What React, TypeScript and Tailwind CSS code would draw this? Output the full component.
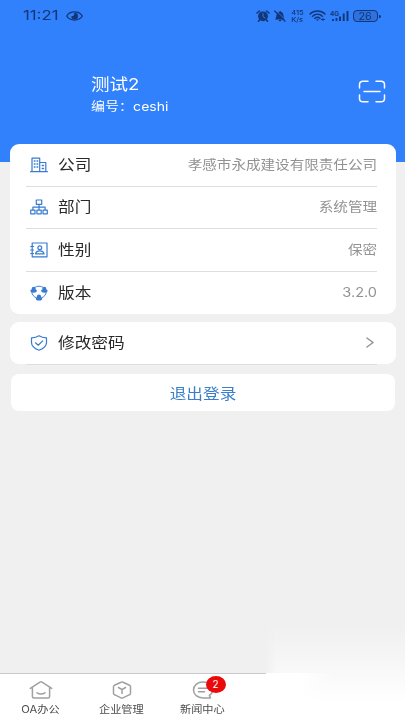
import type { ReactNode } from "react";

const stroke = { fill: "none", stroke: "currentColor", strokeLinecap: "round", strokeLinejoin: "round" } as const;

function StatusBar() {
  return (
    <div className="flex h-8 items-center justify-between pl-[23px] pr-[24px] text-[#123676]">
      <div className="flex items-center gap-[5px]">
        <span className="w-[38px] origin-left scale-x-[1.240] text-[13.500px] leading-none whitespace-nowrap">11:21</span>
        <svg width="17" height="10" viewBox="0 0 17 10">
          <path d="M.7 5C4-.4 13-.4 16.300 5C13 10.400 4 10.400.7 5Z" {...stroke} strokeWidth="1.300" />
          <path d="M8.500 1.700A3.400 3.400 0 1 1 5.200 5.400L7.600 4.800Z" fill="currentColor" />
        </svg>
      </div>
      <div className="flex items-center">
        <svg width="14" height="12" viewBox="0 0 14 12">
          <circle cx="7" cy="6.300" r="4.900" fill="currentColor" />
          <path d="M1 3L3.500 1M13 3L10.500 1M3.500 10L2.500 11.300M10.500 10L11.500 11.300" {...stroke} strokeWidth="1.500" />
          <path d="M7 3.500V6.500L9 8" {...stroke} stroke="#3180fc" strokeWidth=".9" />
        </svg>
        <svg className="ml-[4px]" width="12" height="12" viewBox="0 0 12 12">
          <path d="M1 9.400C2.700 7.500 2 5 3 3.400C3.800 2 5 2 5.300 1.700C6 .6 6.800 1 7 1.800C10.300 3 8.800 7 11 9.400ZM4.500 10H7.600C7 11.800 5.200 11.800 4.500 10Z" fill="currentColor" />
          <path d="M1.800.5L11.700 10" stroke="#3180fc" strokeWidth=".9" />
          <path d="M.7 1L11 11.200" {...stroke} strokeWidth="1.200" />
        </svg>
        <div className="ml-[4px] flex w-[14px] flex-col items-center gap-px text-[6.500px] font-medium">
          <span className="h-[6px] scale-x-[1.150] leading-[6px]">415</span>
          <span className="h-[6px] scale-x-[1.150] leading-[6px]">K/s</span>
        </div>
        <svg className="ml-[5px]" width="17" height="12" viewBox="0 0 17 12">
          <path d="M1 4C5 .1 12 .1 16 4M3.500 6.300C6.500 3.600 10.500 3.600 13.300 6.300M5.800 8.300C7.600 7 9.300 7 11 8.300" {...stroke} strokeWidth="1.500" />
          <path d="M7 9.300H10L8.500 11Z" fill="currentColor" />
          <path d="M12.500 9.500H15.500M14 8.500V10.500" {...stroke} strokeWidth="1" />
        </svg>
        <svg className="ml-[4px]" width="19" height="12" viewBox="0 0 19 12">
          <text x="0" y="5.800" fontSize="6.500" fontWeight="600" fill="currentColor">4G</text>
          <path d="M3 9V11M6.500 8V11M10 6.500V11M13.700 3.500V11M17.500 1V11" stroke="currentColor" strokeWidth="1.900" />
        </svg>
        <div className="ml-[4px] flex h-[12px] w-[25px] items-center justify-center rounded-[4px] border border-[#123676] bg-[#2d72e0] text-[10px] leading-none">
          <span className="scale-x-[1.080]">26</span>
        </div>
        <div className="ml-px h-[3px] w-[2px] rounded-r bg-[#123676]" />
      </div>
    </div>
  );
}

const BuildingIcon = () => (
  <svg width="18" height="16" viewBox="0 0 18 16" {...stroke} strokeWidth="1.200">
    <path d="M2 14.500V1.200H9.700V14.500M9.700 5.500H15.800V14.500M.6 14.700H17.400" />
    <path d="M4.300 4H5M7 4H7.700M4.300 7H5M7 7H7.700M4.300 10H5M7 10H7.700M12.300 8.500H13.500M12.300 11.500H13.500" strokeWidth="1.400" />
  </svg>
);

const DepartmentIcon = () => (
  <svg className="-mt-px" width="18" height="16" viewBox="0 0 18 16" {...stroke} strokeWidth="1.200">
    <path d="M6.300 1H11.700V5.300H6.300ZM.7 11.200H5V14.800H.7ZM6.900 11.200H11.200V14.800H6.900ZM13 11.200H17.300V14.800H13ZM9 5.300V11M2.900 11V8.200H15.100V11" />
  </svg>
);

const ContactIcon = () => (
  <svg className="-mt-px" width="18" height="16" viewBox="0 0 18 16" {...stroke} strokeWidth="1.200">
    <path d="M2.200 1H17V14.800H2.200ZM.7 4.500H3.500M.7 8H3.500M.7 11.500H3.500" />
    <circle cx="9.800" cy="5.800" r="1.900" />
    <path d="M5.500 11.800C6.100 9.500 8 8.800 9.800 8.800C11.600 8.800 13.500 9.500 14.100 11.800Z" />
  </svg>
);

const VersionIcon = () => (
  <svg className="-mt-px" width="18" height="16" viewBox="0 0 18 16">
    <path d="M4.500 2.600C7.200.7 10.800.7 13.500 2.600M1.800 7C2 9.800 3.600 11.600 6 12.600M16.200 7C16 9.800 14.400 11.600 12 12.600" {...stroke} strokeWidth="1" />
    <g fill="currentColor">
      <circle cx="3.700" cy="3.700" r="2" />
      <ellipse cx="3.600" cy="5.800" rx="3.200" ry="1.900" />
      <circle cx="14.300" cy="3.700" r="2" />
      <ellipse cx="14.400" cy="5.800" rx="3.200" ry="1.900" />
      <circle cx="9" cy="11.600" r="2.100" />
      <ellipse cx="9" cy="13.700" rx="3.200" ry="1.900" />
    </g>
  </svg>
);

const ShieldIcon = () => (
  <svg className="-mt-px" width="18" height="16" viewBox="0 0 18 16" {...stroke} strokeWidth="1.200">
    <path d="M9 .8C6.800 2.300 4 2.800 1.500 2.900V7.500C1.500 11 5 13.800 9 15.200C13 13.800 16.500 11 16.500 7.500V2.900C14 2.800 11.200 2.300 9 .8Z" />
    <path d="M5.500 7.800L8.200 10.200L12.700 5.900" />
  </svg>
);

function Row({ icon, label, value, last }: { icon: ReactNode; label: string; value: ReactNode; last?: boolean }) {
  return (
    <div className={`mx-4 flex items-center pl-1 pr-[3px] ${last ? "h-[43px] pt-px" : "h-[42.500px]"}`}>
      <span className="w-[18px] shrink-0 text-[#397bd0]">{icon}</span>
      <span className="ml-[9.500px] origin-left scale-x-[1.110] pb-[2px] text-[15px] leading-none whitespace-nowrap text-[#292929]">{label}</span>
      <span className="ml-auto origin-right scale-x-[1.120] pb-[2px] text-[13px] leading-none whitespace-nowrap text-[#929292]">{value}</span>
    </div>
  );
}

const Divider = () => <div className="ml-4 mr-[19px] -mt-px h-px bg-[#dedede]" />;

const HomeIcon = () => (
  <svg width="24" height="18" viewBox="0 0 24 18" {...stroke} strokeWidth="1.500">
    <path d="M1.300 7.400L11 1.100Q12 .6 13 1.100L22.700 7.400M3.400 6.500V15.500Q3.400 17 5 17H19Q20.600 17 20.600 15.500V6.500M8 11.700C10 13.500 14 13.500 16 11.700" />
  </svg>
);

const CubeIcon = () => (
  <svg width="20" height="18" viewBox="0 0 20 18" {...stroke} strokeWidth="1.500">
    <path d="M9 1.200Q10 .6 11 1.200L17.600 4.300Q18.500 4.800 18.500 5.500V12.500Q18.500 13.300 17.600 13.700L11 16.900Q10 17.300 9 16.900L2.400 13.700Q1.500 13.300 1.500 12.500V5.500Q1.500 4.800 2.400 4.300ZM6.500 6.500L10 8.600L13.500 6.500M10 8.600V12.500" />
  </svg>
);

const NewsIcon = () => (
  <svg width="22" height="18" viewBox="0 0 22 18" {...stroke} strokeWidth="1.500">
    <path d="M18.500 16.900H11C5.500 16.900 1.500 13.500 1.500 9C1.500 4.500 5.500 1.100 11 1.100C16.500 1.100 20.500 4.500 20.500 9C20.500 11.500 19.300 13.300 17.300 14.500ZM6.500 7.200H15M6.500 10.700H12.500" />
  </svg>
);

function Tab({ icon, label, badge }: { icon: ReactNode; label: string; badge?: string }) {
  return (
    <div className="flex w-[81px] flex-col items-center pt-[7px]">
      <div className="relative h-[19px] text-[#a0a0a0]">
        {icon}
        {badge && (
          <span className="absolute -top-[5px] left-[14px] flex h-[17px] w-[20px] items-center justify-center rounded-[50%] bg-[#ec0909] text-[10px] text-white">
            {badge}
          </span>
        )}
      </div>
      <span className="mt-[2px] scale-x-[1.100] text-[10.200px] leading-[14px] whitespace-nowrap text-[#4c4c4c]">{label}</span>
    </div>
  );
}

export default function App() {
  return (
    <div className="relative flex h-[720px] w-[405px] flex-col overflow-hidden bg-[#f0f0f0] font-[Inter,'Noto_Sans_CJK_SC',sans-serif]">
      <header className="h-[162px] shrink-0 bg-[#3180fc]">
        <StatusBar />
        <div className="flex items-start justify-between pl-[91px] pr-[19px] pt-[42px] text-white">
          <div className="flex flex-col items-start">
            <h1 className="origin-left scale-x-[1.160] text-[16px] leading-[20px]">测试2</h1>
            <p className="mt-[4px] origin-left scale-x-[1.170] text-[12px] leading-[17px] whitespace-nowrap">编号：ceshi</p>
          </div>
          <svg className="mt-[6px]" width="28" height="23" viewBox="0 0 28 23" {...stroke} strokeWidth="1.500">
            <path d="M1.500 8V4.500Q1.500 1.200 5 1.200H10M18 1.200H23Q26.500 1.200 26.500 4.500V8M1.500 15V18.500Q1.500 21.800 5 21.800H10M18 21.800H23Q26.500 21.800 26.500 18.500V15M6 11.500H22" />
          </svg>
        </div>
      </header>

      <main className="-mt-[18px] flex flex-1 flex-col">
        <section className="ml-[10px] mr-[9px] h-[170px] rounded-[9px] bg-white">
          <Row icon={<BuildingIcon />} label="公司" value="孝感市永成建设有限责任公司" />
          <Divider />
          <Row icon={<DepartmentIcon />} label="部门" value="系统管理" />
          <Divider />
          <Row icon={<ContactIcon />} label="性别" value="保密" />
          <Divider />
          <Row icon={<VersionIcon />} label="版本" value="3.2.0" last />
        </section>
        <section className="ml-[10px] mr-[9px] mt-2 h-[42px] rounded-[9px] bg-white">
          <Row
            icon={<ShieldIcon />}
            label="修改密码"
            value={
              <svg className="mr-[2px]" width="8" height="11" viewBox="0 0 8 11" {...stroke} strokeWidth="1.200">
                <path d="M1 1L6.500 5.500L1 10" />
              </svg>
            }
          />
          <Divider />
        </section>
        <button className="ml-[11px] mr-[10px] mt-[10px] flex h-[37px] items-center justify-center rounded-[8px] bg-white pt-px text-[15px] leading-none text-[#3a7fca]">
          <span className="scale-x-[1.110]">退出登录</span>
        </button>
      </main>

      <nav className="flex h-[47px] shrink-0 border-t border-[#c8c8c8] bg-white">
        <Tab icon={<HomeIcon />} label="OA办公" />
        <Tab icon={<CubeIcon />} label="企业管理" />
        <Tab icon={<NewsIcon />} label="新闻中心" badge="2" />
      </nav>
      <div className="absolute right-0 bottom-0 h-[92px] w-[141px] bg-linear-to-b from-[#f0f0f0] via-[#f9f9f9] via-50% to-white to-80% mask-[linear-gradient(to_right,transparent,black_14px)]" />
      <div className="absolute right-[72px] bottom-0 h-[47px] w-[67px] bg-linear-to-r from-white via-white to-transparent" />
    </div>
  );
}
